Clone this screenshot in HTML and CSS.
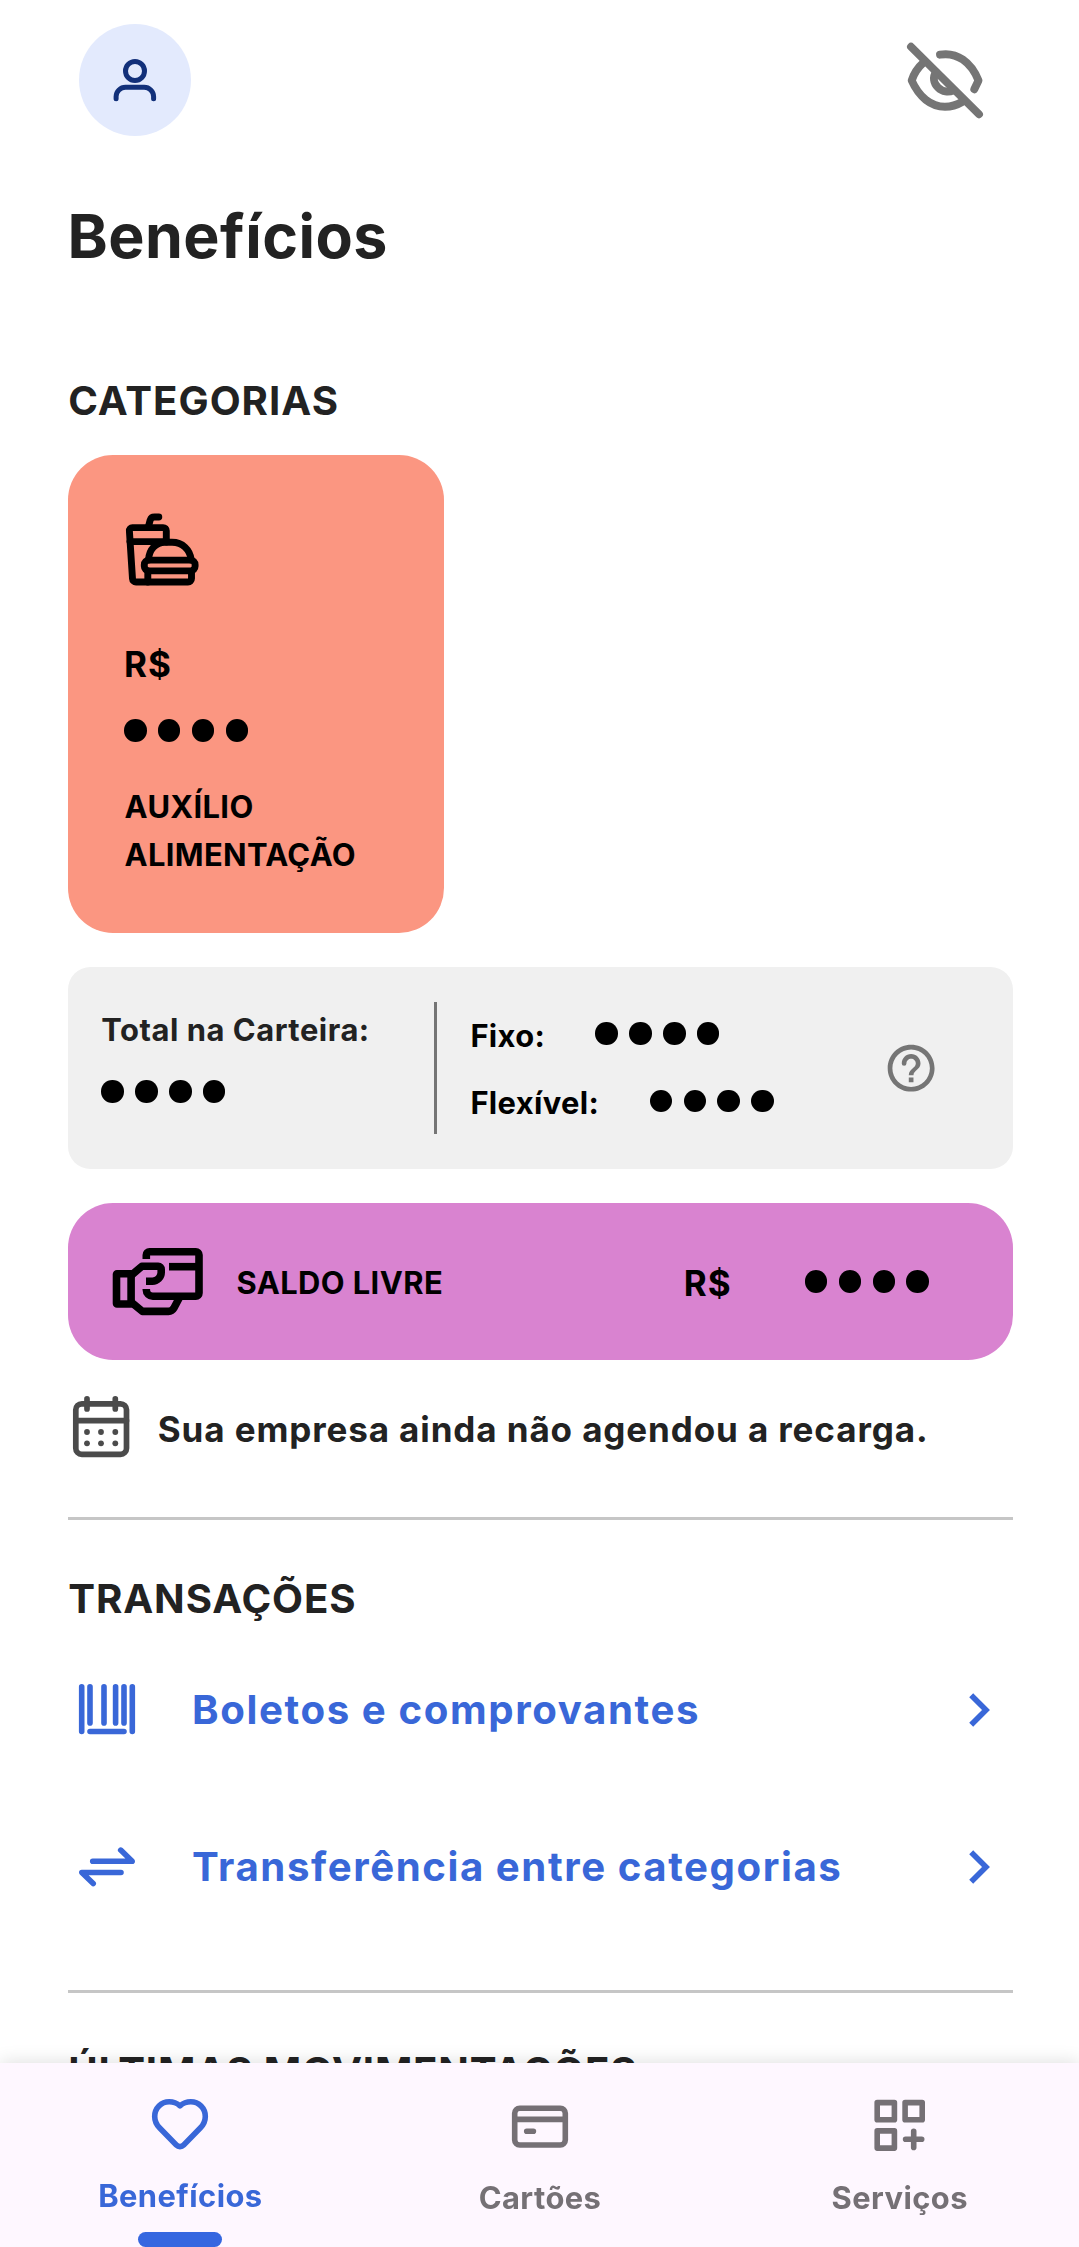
FILE: index.html
```html
<!DOCTYPE html>
<html lang="pt-BR">
<head>
<meta charset="utf-8">
<title>Benefícios</title>
<link rel="stylesheet" href="styles.css">
</head>
<body>
<main class="screen">
  <header class="topbar">
    <button class="avatar" aria-label="Perfil">
      <svg class="icon icon-user" viewBox="79 24 112 112"><circle cx="135" cy="71" r="9.5"/><path d="M116.1 98.8V96.5A9.4 9.4 0 0 1 125.5 87.3H144.2A9.4 9.4 0 0 1 153.6 96.5V98.8"/></svg>
    </button>
    <button class="toggle" aria-label="Mostrar valores">
      <svg class="icon icon-eye" viewBox="905 38 80 82"><path d="M911 45.7L979 113.3"/><path d="M940 53.7C957 50.8 971 61 978.5 79.5L974.3 88.3"/><path d="M923.3 61.7Q915 69 911.7 79.5C919 96 931 105.7 945 105.7C951 105.7 957 104 962 101"/><path d="M936 71C932.7 76 933.5 82 938 86.5C942.5 91 948.5 91.5 953.5 89.3"/></svg>
    </button>
  </header>

  <h1 class="title">Benefícios</h1>

  <h2 class="section">CATEGORIAS</h2>
  <article class="category">
    <svg class="icon icon-food" viewBox="124 510 78 78"><path d="M158.8 517H154.5Q151.2 517 150.2 520L148.6 526"/><path d="M166.3 542V530.8A3.2 3.2 0 0 0 163.1 527.6H132.5A3.2 3.2 0 0 0 129.4 531L132.5 578.7A3.5 3.5 0 0 0 136 582H188A3.5 3.5 0 0 0 191.5 578.5V572"/><path d="M130 541.6H167"/><path d="M148.5 560C149 549.5 156 542.3 165 542.3H172C182.5 542.3 190 549.5 191.3 560"/><rect x="144.3" y="560.1" width="50.8" height="10.8" rx="4.6"/><path d="M147.8 571V582"/></svg>
    <p class="currency">R$</p>
    <div class="dots"><i></i><i></i><i></i><i></i></div>
    <p class="category-name">AUXÍLIO<br>ALIMENTAÇÃO</p>
  </article>

  <section class="wallet">
    <div class="wallet-total">
      <p class="label label-total">Total na Carteira:</p>
      <div class="dots"><i></i><i></i><i></i><i></i></div>
    </div>
    <div class="wallet-split">
      <div class="split-row row-fixed"><p class="label">Fixo:</p><div class="dots"><i></i><i></i><i></i><i></i></div></div>
      <div class="split-row row-flex"><p class="label">Flexível:</p><div class="dots"><i></i><i></i><i></i><i></i></div></div>
    </div>
    <svg class="icon-help" viewBox="0 0 24 24"><path d="M11 18h2v-2h-2v2zm1-16C6.48 2 2 6.48 2 12s4.48 10 10 10 10-4.48 10-10S17.52 2 12 2zm0 18c-4.41 0-8-3.59-8-8s3.59-8 8-8 8 3.59 8 8-3.59 8-8 8zm0-14c-2.21 0-4 1.79-4 4a1 1 0 0 0 2 0c0-1.1.9-2 2-2s2 .9 2 2c0 2-3 2.3-3 5h2c0-2 3-2.5 3-5 0-2.21-1.79-4-4-4z"/></svg>
  </section>

  <section class="balance">
    <svg class="icon icon-hand" viewBox="110 1245 96 74"><path d="M146.3 1259V1254.9A3.2 3.2 0 0 1 149.5 1251.7H195.8A3.2 3.2 0 0 1 199 1254.9V1293.1A3.2 3.2 0 0 1 195.8 1296.3H152.8A6.5 6.5 0 0 1 146.3 1289.8V1289"/><path d="M169 1266.7H199"/><rect x="116.5" y="1273.7" width="14.6" height="30.3" rx="0.5"/><path d="M131 1275.5L141.8 1266.3H158.2A3 3 0 0 1 161.2 1269.3V1272.5A8.8 8.8 0 0 1 152.4 1281.2H146"/><path d="M131 1302L142.4 1311.4H168.5Q172 1311.4 173.8 1308.2L179.5 1297.5"/></svg>
    <p class="balance-name">SALDO LIVRE</p>
    <p class="currency">R$</p>
    <div class="dots"><i></i><i></i><i></i><i></i></div>
  </section>

  <section class="notice">
    <svg class="icon icon-calendar" viewBox="71 1394 60 65"><rect x="75.8" y="1403.8" width="50.7" height="50.5" rx="6"/><path d="M76 1420.7H126.5M87 1398.8V1409M115.3 1398.8V1409"/><g class="days"><circle cx="87" cy="1432" r="2.9"/><circle cx="101" cy="1432" r="2.9"/><circle cx="115.3" cy="1432" r="2.9"/><circle cx="87" cy="1443.3" r="2.9"/><circle cx="101" cy="1443.3" r="2.9"/><circle cx="115.3" cy="1443.3" r="2.9"/></g></svg>
    <p class="notice-text">Sua empresa ainda não agendou a recarga.</p>
  </section>

  <hr class="rule">

  <h2 class="section section-tx">TRANSAÇÕES</h2>
  <a class="link">
    <svg class="icon icon-link" viewBox="77 1679.8 60 60"><path d="M81.7 1686.5V1731.3M90 1686.5V1722.7M104 1686.5V1722.7M115.6 1686.5V1722.7M124 1686.5V1722.7M132.3 1686.5V1731.3M90 1731.3H124"/></svg>
    <span class="link-text">Boletos e comprovantes</span>
    <svg class="icon icon-chevron" viewBox="967 1689.3 25 40"><path d="M971.2 1694.5L986 1709.3L971.2 1724.1"/></svg>
  </a>
  <a class="link">
    <svg class="icon icon-link" viewBox="77 1836.5 60 60"><path d="M92.7 1860.7H132.2L120.7 1849.6M121 1872H81.8L93.2 1883"/></svg>
    <span class="link-text link-transfer">Transferência entre categorias</span>
    <svg class="icon icon-chevron" viewBox="967 1689.3 25 40"><path d="M971.2 1694.5L986 1709.3L971.2 1724.1"/></svg>
  </a>

  <hr class="rule rule-last">

  <h2 class="section section-last">ÚLTIMAS MOVIMENTAÇÕES</h2>
</main>

<nav class="tabs">
  <a class="tab tab-active">
    <svg class="icon icon-tab" viewBox="148 2093 64 64"><path d="M180 2105.8C177 2103.2 173.3 2101.8 169.2 2101.8C161.2 2101.8 154.7 2108.3 154.7 2116.5C154.7 2121 156.4 2124.6 159.5 2127.8L176.3 2145C178.4 2147.1 181.6 2147.1 183.7 2145L200.5 2127.8C203.6 2124.6 205.3 2121 205.3 2116.5C205.3 2108.3 198.8 2101.8 190.8 2101.8C186.7 2101.8 183 2103.2 180 2105.8Z"/></svg>
    <span class="tab-label">Benefícios</span>
    <span class="indicator"></span>
  </a>
  <a class="tab">
    <svg class="icon icon-tab" viewBox="508 2093 64 64"><rect x="514.7" y="2108.3" width="50.6" height="36.7" rx="5"/><path d="M515 2119.4H565M526.7 2131.3H533.4"/></svg>
    <span class="tab-label">Cartões</span>
  </a>
  <a class="tab">
    <svg class="icon icon-tab" viewBox="868 2093 64 64"><path d="M878.2 2102.6H895.4V2119.7H878.2ZM906.1 2102.6H923.2V2119.7H906.1ZM878.2 2130.9H895.4V2148.1H878.2ZM906.6 2139.3H922.7M914.7 2131.3V2147.4"/></svg>
    <span class="tab-label">Serviços</span>
  </a>
</nav>
</body>
</html>
```
FILE: styles.css
```css
* { box-sizing: border-box; }

body {
  margin: 0;
  height: 2247px;
  overflow: hidden;
  background: #fff;
  color: #222;
  font-family: Inter, "Liberation Sans", sans-serif;
  font-weight: 700;
}

h1, h2, p { margin: 0; font-weight: inherit; white-space: nowrap; }
button { padding: 0; border: 0; background: none; }
svg { display: block; flex: none; }

.screen {
  display: flex;
  flex-direction: column;
  height: 2247px;
  overflow: hidden;
  padding: 24px 66.5px 0 67.5px;
}
.screen > * { flex: none; }

.icon {
  fill: none;
  stroke: currentColor;
  stroke-linecap: round;
  stroke-linejoin: round;
}

.topbar {
  display: flex;
  justify-content: space-between;
  align-items: center;
  height: 112px;
  padding: 0 27.5px 0 11.5px;
}
.avatar {
  width: 112px;
  height: 112px;
  border-radius: 50%;
  background: #e3eafd;
  color: #12307a;
}
.icon-user { width: 112px; height: 112px; stroke-width: 5px; }
.toggle { color: #757575; }
.icon-eye { width: 80px; height: 82px; stroke-width: 7.9px; }

.title {
  margin-top: 60px;
  font-size: 60.9px;
  line-height: 80px;
  letter-spacing: 0.45px;
}

.section {
  margin-top: 100.5px;
  padding-left: 0.7px;
  font-size: 40.2px;
  line-height: 48px;
  letter-spacing: 1px;
}

.dots { display: flex; gap: 11.25px; }
.dots i {
  width: 22.6px;
  height: 22.6px;
  border-radius: 50%;
  background: #000;
}

.category {
  width: 376.8px;
  height: 478px;
  margin-top: 30px;
  padding: 55.7px 56.5px 0;
  border-radius: 45px;
  background: #fb9681;
  color: #000;
}
.icon-food { width: 78px; height: 78px; stroke-width: 6.9px; }
.currency { font-size: 35px; line-height: 44px; letter-spacing: 1.1px; }
.category .currency { margin-top: 54px; }
.category .dots { margin-top: 33px; }
.category-name {
  margin-top: 41.5px;
  padding-left: 0.6px;
  font-size: 30.9px;
  line-height: 48px;
  letter-spacing: 0.35px;
}

.wallet {
  display: flex;
  height: 202.7px;
  margin-top: 34px;
  padding: 35px 0 0 33.8px;
  border-radius: 22.5px;
  background: #f0f0f0;
}
.label { font-size: 30.9px; line-height: 44px; letter-spacing: 0.36px; }
.wallet-total {
  width: 335.4px;
  height: 132.5px;
  border-right: 3px solid #757575;
}
.label-total { margin-top: 6.5px; letter-spacing: 0.53px; }
.wallet-total .dots { margin-top: 28px; }
.wallet-split { width: 451px; padding-left: 33.7px; color: #000; }
.split-row { display: flex; }
.row-fixed { gap: 50px; margin-top: 12.7px; }
.row-flex { gap: 50.5px; margin-top: 23.2px; }
.split-row .dots { margin-top: 8.3px; }
.icon-help { width: 56.25px; height: 56.25px; margin-top: 38.3px; margin-left: -4.8px; fill: #757575; }

.balance {
  display: flex;
  align-items: center;
  height: 157.3px;
  margin-top: 33.8px;
  padding: 0 83.5px 0 42.5px;
  border-radius: 45px;
  background: #d983d0;
  color: #000;
}
.icon-hand {
  width: 96px;
  height: 74px;
  stroke-width: 7.6px;
  stroke-linecap: butt;
}
.balance-name { margin-left: 30.5px; margin-top: 3px; font-size: 30.9px; line-height: 44px; letter-spacing: 0.42px; }
.balance .currency { margin-left: auto; margin-top: 2.5px; }
.balance .dots { width: 124.2px; margin-left: 73px; }

.notice { display: flex; margin-top: 34px; padding-left: 3.5px; }
.icon-calendar { width: 60px; height: 65px; stroke-width: 5.7px; color: #4b4b4b; }
.days { fill: currentColor; stroke: none; }
.notice-text { margin: 12.6px 0 0 26.8px; font-size: 35px; line-height: 44px; letter-spacing: 0.89px; }

.rule { width: 100%; height: 3px; margin: 58px 0 0; border: 0; background: #c6c6c6; }
.section-tx { margin-top: 54.5px; letter-spacing: 0.9px; }

.link {
  display: flex;
  align-items: center;
  height: 157px;
  padding: 0 20.5px 0 9.5px;
  color: #3967d8;
}
.section-tx + .link { margin-top: 8.5px; }
.icon-link { width: 60px; height: 60px; stroke-width: 5.6px; }
.icon-chevron { width: 25px; height: 40px; margin-left: auto; stroke-width: 5.6px; stroke-linecap: butt; stroke-linejoin: miter; }
.link-text { margin-left: 55px; font-size: 40.2px; line-height: 48px; letter-spacing: 1.6px; }
.link-transfer { letter-spacing: 1.56px; }

.rule-last { margin-top: 45px; }
.section-last { margin-top: 54.5px; letter-spacing: 0.78px; }

.tabs {
  position: fixed;
  left: 0;
  right: 0;
  bottom: 0;
  display: flex;
  height: 184px;
  background: #fef7ff;
  color: #757075;
  box-shadow: 0 -1px 17px rgba(0, 0, 0, 0.13);
}
.tab {
  display: flex;
  flex: 1;
  flex-direction: column;
  align-items: center;
  padding-top: 30px;
}
.tab-active { color: #3967d8; }
.icon-tab { width: 64px; height: 64px; stroke-width: 5.6px; }
.tab-label { margin-top: 21px; padding-left: 1px; font-size: 30.9px; line-height: 40px; letter-spacing: 0.42px; }
.tab-active .tab-label { margin-top: 19px; }
.indicator { width: 84.5px; height: 15px; margin-top: 16px; border-radius: 7.5px; background: #3567e0; }
```
